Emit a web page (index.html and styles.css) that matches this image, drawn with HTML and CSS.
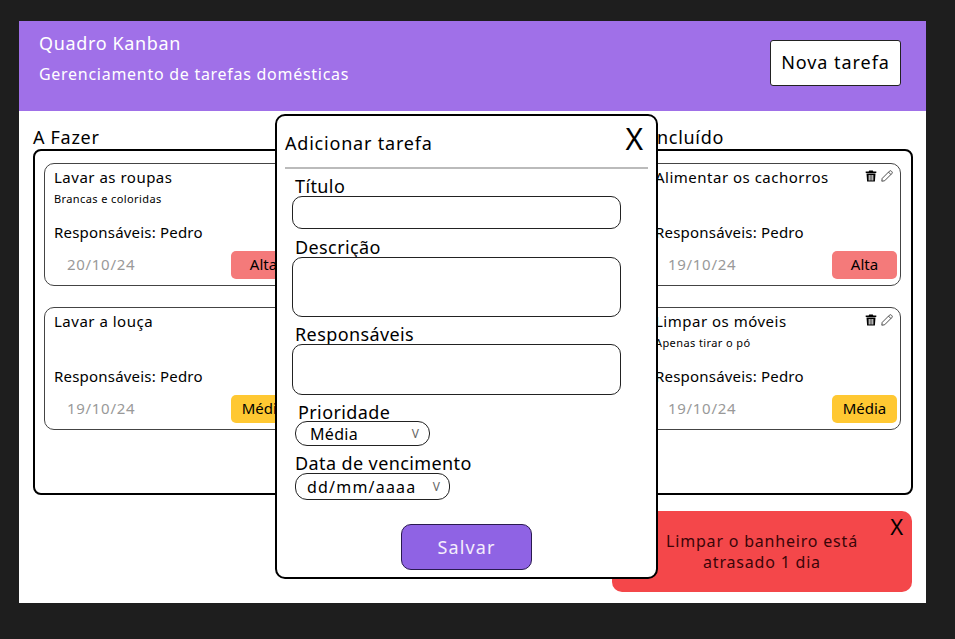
FILE: index.html
```html
<!DOCTYPE html>
<html lang="pt-BR">
<head>
    <meta charset="utf-8">
    <title>Quadro Kanban</title>
    <link rel="stylesheet" href="styles.css">
</head>
<body>
    <svg class="sprites" width="0" height="0">
        <symbol id="trash" viewBox="0 0 12 12">
            <path d="M4.2 0.6h3.6l.5 1h3v1.3H.7V1.6h3zM1.5 3.6h9l-.6 8H2.1zM3.7 5v5.4h1V5zM5.5 5v5.4h1V5zM7.3 5v5.4h1V5z" fill="#000" fill-rule="evenodd"/>
        </symbol>
        <symbol id="pencil" viewBox="0 0 12 12">
            <path d="M1.2 8.400 8.400 1.200a1.400 1.400 0 0 1 2 0l.4.4a1.400 1.400 0 0 1 0 2L3.600 10.800.8 11.200zM7.500 2.100l2.400 2.400" fill="none" stroke="#222" stroke-width=".8"/>
        </symbol>
    </svg>

    <div class="app">
        <header class="topbar">
            <div>
                <h1>Quadro Kanban</h1>
                <p>Gerenciamento de tarefas domésticas</p>
            </div>
            <button class="new-task">Nova tarefa</button>
        </header>

        <div class="labels">
            <h2>A Fazer</h2>
            <h2>Concluído</h2>
        </div>

        <main class="board">
            <section class="column">
                <article class="card">
                    <div class="card-top">
                        <h3>Lavar as roupas</h3>
                    </div>
                    <p class="desc">Brancas e coloridas</p>
                    <p class="people">Responsáveis: Pedro</p>
                    <div class="card-foot">
                        <span class="date">20/10/24</span>
                        <span class="tag high">Alta</span>
                    </div>
                </article>
                <article class="card">
                    <div class="card-top">
                        <h3>Lavar a louça</h3>
                    </div>
                    <p class="desc"></p>
                    <p class="people">Responsáveis: Pedro</p>
                    <div class="card-foot">
                        <span class="date">19/10/24</span>
                        <span class="tag mid">Média</span>
                    </div>
                </article>
            </section>

            <section class="column">
                <article class="card">
                    <div class="card-top">
                        <h3>Alimentar os cachorros</h3>
                        <span class="icons">
                            <svg width="12" height="12"><use href="#trash"/></svg>
                            <svg width="12" height="12"><use href="#pencil"/></svg>
                        </span>
                    </div>
                    <p class="desc"></p>
                    <p class="people">Responsáveis: Pedro</p>
                    <div class="card-foot">
                        <span class="date">19/10/24</span>
                        <span class="tag high">Alta</span>
                    </div>
                </article>
                <article class="card">
                    <div class="card-top">
                        <h3>Limpar os móveis</h3>
                        <span class="icons">
                            <svg width="12" height="12"><use href="#trash"/></svg>
                            <svg width="12" height="12"><use href="#pencil"/></svg>
                        </span>
                    </div>
                    <p class="desc">Apenas tirar o pó</p>
                    <p class="people">Responsáveis: Pedro</p>
                    <div class="card-foot">
                        <span class="date">19/10/24</span>
                        <span class="tag mid">Média</span>
                    </div>
                </article>
            </section>
        </main>

        <aside class="toast">
            <span class="toast-close">X</span>
            <p>Limpar o banheiro está<br>atrasado 1 dia</p>
        </aside>

        <form class="modal">
            <div class="modal-head">
                <h2>Adicionar tarefa</h2>
                <span class="modal-close">X</span>
            </div>
            <label class="field-label label-title">Título</label>
            <div class="box box-title"></div>
            <label class="field-label">Descrição</label>
            <div class="box box-desc"></div>
            <label class="field-label">Responsáveis</label>
            <div class="box box-people"></div>
            <label class="field-label label-priority">Prioridade</label>
            <div class="picker picker-priority">
                <span>Média</span>
                <span class="chevron">V</span>
            </div>
            <label class="field-label label-date">Data de vencimento</label>
            <div class="picker picker-date">
                <span>dd/mm/aaaa</span>
                <span class="chevron">V</span>
            </div>
            <button type="button" class="save">Salvar</button>
        </form>
    </div>
</body>
</html>
```

FILE: styles.css
```css
*{
    box-sizing:border-box;
}
html,body{
    height:100%;
    overflow:hidden;
}
body{
    margin:0;
    padding:21px 29px 36px 19px;
    background:#1e1e1e;
    font-family:"Noto Sans",sans-serif;
    color:#000;
}
h1,h2,h3,p{
    margin:0;
    font-weight:normal;
}
.sprites{
    display:block;
    height:0;
}
.app{
    position:relative;
    height:582px;
    background:#fff;
    overflow:hidden;
}
.topbar{
    height:90px;
    padding:10px 25px 0 20px;
    background:#a070e8;
    color:#fff;
    display:flex;
    justify-content:space-between;
    align-items:flex-start;
}
.topbar h1{
    font-size:18px;
    line-height:24px;
    letter-spacing:.65px;
}
.topbar p{
    margin-top:8px;
    font-size:16px;
    line-height:22px;
    letter-spacing:.72px;
}
.new-task{
    width:131px;
    height:46px;
    margin-top:9px;
    padding-bottom:3px;
    background:#fff;
    border:1px solid #222;
    border-radius:3px;
    font:18px "Noto Sans",sans-serif;
    letter-spacing:.95px;
}
.labels{
    display:flex;
    justify-content:space-between;
    padding:14px 202px 0 14px;
}
.labels h2{
    font-size:18px;
    line-height:24px;
    letter-spacing:.7px;
}
.board{
    margin:0 13px 0 14px;
    height:346px;
    padding:12px 10px 12px 9px;
    border:2px solid #000;
    border-radius:8px;
    display:flex;
    justify-content:space-between;
}
.column{
    width:256px;
    display:flex;
    flex-direction:column;
    gap:21px;
}
.card{
    height:123px;
    padding:3px 3px 6px 9px;
    border:1px solid #444;
    border-radius:10px;
}
.card-top{
    display:flex;
    justify-content:space-between;
    height:20px;
}
.card h3{
    font-size:15px;
    line-height:20px;
    letter-spacing:.5px;
}
.icons{
    display:flex;
    gap:4px;
    padding:3px 4px 0 0;
}
.desc{
    height:20px;
    margin-top:2px;
    font-size:11px;
    line-height:20px;
    letter-spacing:.4px;
}
.people{
    margin-top:13px;
    font-size:15px;
    line-height:20px;
    letter-spacing:.2px;
}
.card-foot{
    margin-top:9px;
    display:flex;
    justify-content:space-between;
    align-items:center;
}
.date{
    margin:0 0 2px 13px;
    font-size:15px;
    letter-spacing:.7px;
    color:#999;
}
.tag{
    width:65px;
    height:28px;
    border-radius:5px;
    font-size:15px;
    line-height:27px;
    text-align:center;
}
.high{
    background:#f47a7a;
}
.mid{
    background:#ffc832;
}
.toast{
    position:absolute;
    left:593px;
    top:490px;
    width:300px;
    height:81px;
    padding-top:20px;
    background:#f4474a;
    border-radius:10px;
    color:#3a0508;
    font-size:16px;
    line-height:21px;
    text-align:center;
    letter-spacing:.8px;
}
.toast-close{
    position:absolute;
    right:8px;
    top:2px;
    font-size:22px;
    line-height:26px;
    color:#000;
}
.modal{
    position:absolute;
    left:256px;
    top:93px;
    width:383px;
    height:465px;
    padding:0 8px;
    background:#fff;
    border:2px solid #000;
    border-radius:10px;
    display:flex;
    flex-direction:column;
    align-items:flex-start;
}
.modal-head{
    width:100%;
    height:53px;
    padding-top:14px;
    border-bottom:2px solid #bbb;
    display:flex;
    justify-content:space-between;
    align-items:flex-start;
}
.modal-head h2{
    font-size:18px;
    line-height:26px;
    letter-spacing:.8px;
}
.modal-close{
    margin-top:-11px;
    margin-right:5px;
    font-size:30px;
    line-height:40px;
}
.field-label{
    margin-left:10px;
    font-size:18px;
    line-height:20px;
    letter-spacing:.4px;
}
.label-title{
    margin-top:7px;
}
.box{
    width:329px;
    margin:0 0 7px 7px;
    border:1px solid #222;
    border-radius:10px;
}
.box-title{
    height:33px;
    margin-bottom:8px;
}
.box-desc{
    height:60px;
}
.box-people{
    height:51px;
}
.label-priority{
    margin:0 0 -1px 13px;
}
.label-date{
    margin:7px 0 0 10px;
}
.picker{
    margin-left:10px;
    border:1px solid #222;
    border-radius:12px;
    display:flex;
    justify-content:space-between;
    align-items:center;
    font-size:16px;
    letter-spacing:.3px;
}
.picker-priority{
    width:135px;
    height:25px;
    padding:0 10px 0 14px;
}
.picker-date{
    width:155px;
    height:27px;
    padding:0 9px 0 11px;
    letter-spacing:1.2px;
}
.chevron{
    font-size:12px;
    letter-spacing:0;
    color:#666;
}
.save{
    align-self:flex-start;
    width:131px;
    height:46px;
    margin:24px 0 0 116px;
    background:#8f63e4;
    border:1px solid #2a1a50;
    border-radius:10px;
    color:#f4eefc;
    font:18px "Noto Sans",sans-serif;
    letter-spacing:1.1px;
}
```
